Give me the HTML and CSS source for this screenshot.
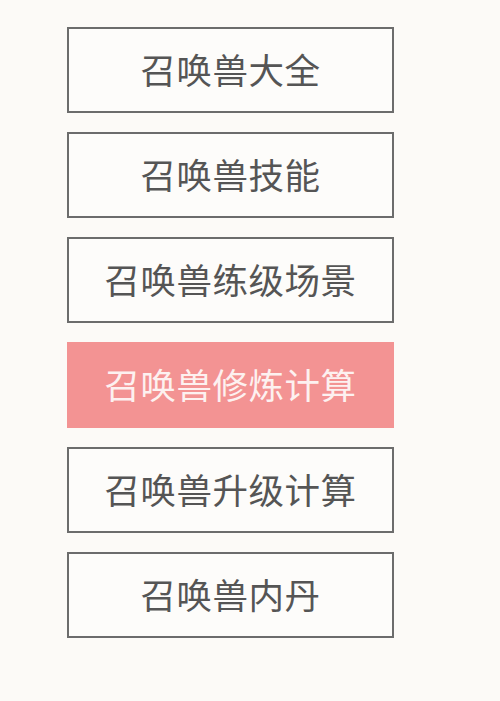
FILE: index.html
```html
<!DOCTYPE html>
<html lang="zh">
<head>
<meta charset="utf-8">
<title>召唤兽</title>
<link rel="stylesheet" href="styles.css">
</head>
<body>
<div class="menu">
  <div class="item">召唤兽大全</div>
  <div class="item">召唤兽技能</div>
  <div class="item">召唤兽练级场景</div>
  <div class="item active">召唤兽修炼计算</div>
  <div class="item">召唤兽升级计算</div>
  <div class="item">召唤兽内丹</div>
</div>
</body>
</html>
```
FILE: styles.css
```css
html, body {
  margin: 0;
  padding: 0;
  background: #fcfaf7;
}
body {
  width: 500px;
  height: 701px;
  overflow: hidden;
  font-family: "Noto Sans CJK SC", "Noto Sans", sans-serif;
}
.menu {
  display: flex;
  flex-direction: column;
  gap: 19px;
  padding: 27px 0 0 67px;
}
.item {
  box-sizing: border-box;
  width: 327px;
  height: 86px;
  padding-bottom: 4px;
  border: 2px solid #6c6c6c;
  display: flex;
  align-items: center;
  justify-content: center;
  font-size: 35.5px;
  color: #555555;
  background: #fdfcfa;
  letter-spacing: 0.5px;
}
.item.active {
  background: #f39393;
  border-color: #f39393;
  color: #fdf1f0;
}
```
